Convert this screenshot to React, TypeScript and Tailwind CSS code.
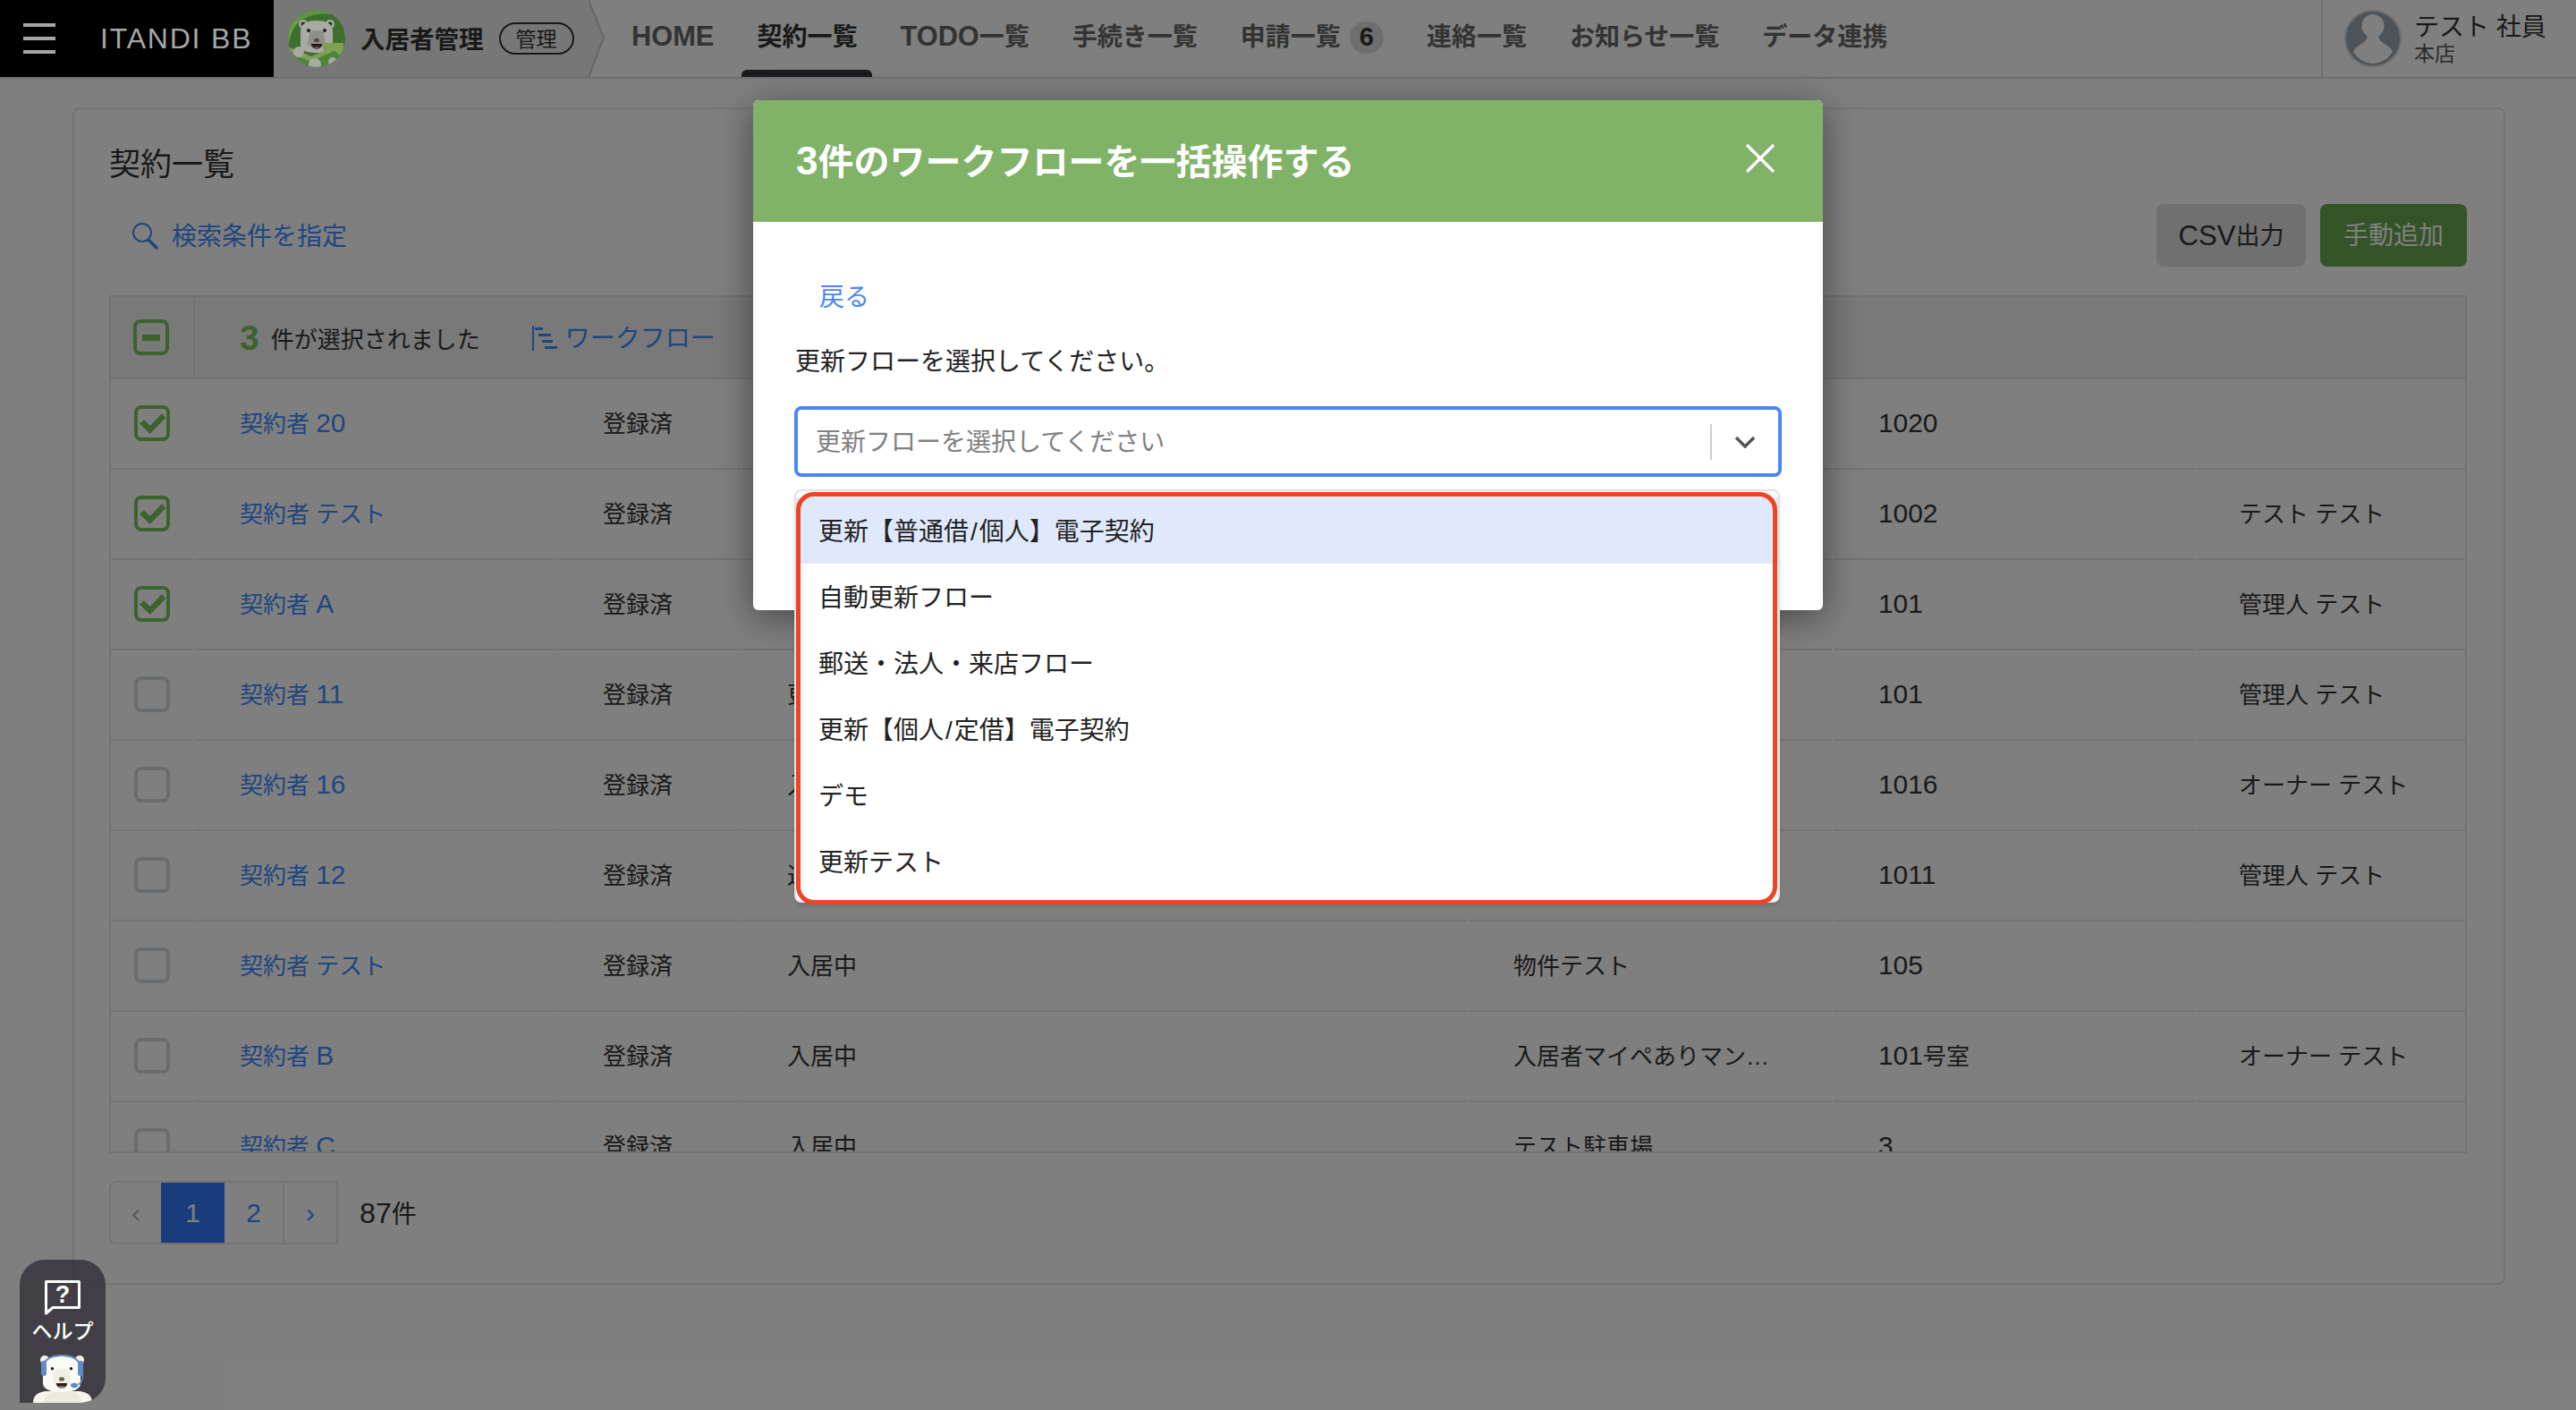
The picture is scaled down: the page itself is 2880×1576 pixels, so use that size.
import { Fragment } from 'react';

const NAV = ['HOME', '契約一覧', 'TODO一覧', '手続き一覧', '申請一覧', '連絡一覧', 'お知らせ一覧', 'データ連携'];

const ROWS = [
  { name: '契約者 20', status: '', building: '', room: '1020', owner: '', checked: true },
  { name: '契約者 テスト', status: '', building: '', room: '1002', owner: 'テスト テスト', checked: true },
  { name: '契約者 A', status: '', building: '', room: '101', owner: '管理人 テスト', checked: true },
  { name: '契約者 11', status: '更新中', building: '', room: '101', owner: '管理人 テスト', checked: false },
  { name: '契約者 16', status: '入居中', building: '', room: '1016', owner: 'オーナー テスト', checked: false },
  { name: '契約者 12', status: '退去済', building: '', room: '1011', owner: '管理人 テスト', checked: false },
  { name: '契約者 テスト', status: '入居中', building: '物件テスト', room: '105', owner: '', checked: false },
  { name: '契約者 B', status: '入居中', building: '入居者マイペありマン…', room: '101号室', owner: 'オーナー テスト', checked: false },
  { name: '契約者 C', status: '入居中', building: 'テスト駐車場', room: '3', owner: '', checked: false },
];

const OPTIONS = ['更新【普通借/個人】電子契約', '自動更新フロー', '郵送・法人・来店フロー', '更新【個人/定借】電子契約', 'デモ', '更新テスト'];

// latin glyphs in the original font run larger than the kana next to them
function Mixed({ text, tight }: { text: string; tight?: boolean }) {
  return (
    <>
      {text.split(/([A-Za-z0-9]+)/).map((part, i) =>
        /^[A-Za-z0-9]+$/.test(part) ? (
          <span key={i} className={`${tight ? 'text-[1.1em]' : 'text-[1.15em]'} leading-none`}>{part}</span>
        ) : (
          <Fragment key={i}>{part}</Fragment>
        )
      )}
    </>
  );
}

function Option({ text }: { text: string }) {
  const parts = text.split('/');
  return (
    <>
      {parts.map((part, i) => (
        <Fragment key={i}>
          {i > 0 && <span className="mx-[2px]">/</span>}
          {part}
        </Fragment>
      ))}
    </>
  );
}

function Checkbox({ state }: { state: 'on' | 'off' | 'some' }) {
  if (state === 'off') {
    return <div className="h-10 w-10 rounded-lg border-4 border-[#d3d8dc]" />;
  }
  return (
    <div className="flex h-10 w-10 items-center justify-center rounded-lg border-4 border-[#78c45c]">
      {state === 'some' ? (
        <div className="h-[7px] w-5 bg-[#78c45c]" />
      ) : (
        <svg width="32" height="32" viewBox="4 4 32 32" className="shrink-0">
          <polygon points="6,20.6 11,16.3 17.7,23 31,9 35.3,14 17.7,32" fill="#78c45c" />
        </svg>
      )}
    </div>
  );
}

function ManagerBear() {
  return (
    <svg width="64" height="64" viewBox="0 0 64 64" className="relative z-20 shrink-0">
      <defs>
        <clipPath id="bear-clip">
          <circle cx="32" cy="32" r="32" />
        </clipPath>
      </defs>
      <g clipPath="url(#bear-clip)">
        <rect width="64" height="64" fill="#3f6f2e" />
        <path d="M0 26 C14 6 36 0 60 8 L44 -4 L0 0 Z" fill="#5f9440" />
        <path d="M0 44 C2 28 6 18 14 12 L0 12 Z" fill="#6a9c46" />
        <circle cx="17" cy="16" r="5" fill="#a8a9a2" />
        <circle cx="47" cy="16" r="5" fill="#a8a9a2" />
        <circle cx="17" cy="16" r="2.4" fill="#2c2c2c" />
        <circle cx="47" cy="16" r="2.4" fill="#2c2c2c" />
        <path d="M14 24 C14 15 22 12 32 12 C42 12 50 15 50 24 L50 40 C50 46 42 48 32 48 C22 48 14 46 14 40 Z" fill="#a9aaa2" />
        <path d="M24 26 C24 22 40 22 40 26 L42 38 C42 43 22 43 22 38 Z" fill="#8f908a" />
        <circle cx="23" cy="23" r="2" fill="#1e1e1e" />
        <circle cx="41" cy="23" r="2" fill="#1e1e1e" />
        <ellipse cx="32" cy="34" rx="3" ry="2.2" fill="#544a42" />
        <path d="M26 38 L38 38 C38 42 35 43.5 32 43.5 C29 43.5 26 42 26 38 Z" fill="#1e1e1e" />
        <path d="M28 41.5 L36 41.5 C35 43 29 43 28 41.5 Z" fill="#b56d5a" />
        <path d="M2 42 L26 52 L40 46 L38 37 L62 37 L66 70 L0 70 Z" fill="#7da154" />
        <path d="M6 50 L26 58 L42 50 L52 46 L60 52 L56 70 L6 70 Z" fill="#4f8438" />
        <circle cx="12" cy="47" r="6" fill="#a9aaa2" />
        <circle cx="30" cy="61" r="7" fill="#a9aaa2" />
        <circle cx="50" cy="58" r="5" fill="#a9aaa2" />
      </g>
    </svg>
  );
}

function HelpBear() {
  return (
    <svg width="66" height="54" viewBox="0 0 66 54" className="mt-auto shrink-0">
      <path d="M0 54 C0 45 6 42 14 41 L52 41 C60 42 66 45 66 54 Z" fill="#f6f6ef" />
      <path d="M12 54 C12 44 20 40 33 40 C46 40 54 44 54 54 Z" fill="#ece9dd" />
      <circle cx="13" cy="6" r="5" fill="#f3efe2" />
      <circle cx="52" cy="6" r="5" fill="#f3efe2" />
      <path d="M11 14 C11 5 20 2 32 2 C44 2 53 5 53 14 L53 32 C53 39 44 42 32 42 C20 42 11 39 11 32 Z" fill="#fbfbf6" />
      <path d="M24 20 C24 15 40 15 40 20 L42 30 C42 39 22 39 22 30 Z" fill="#f0eee4" />
      <path d="M11 14 C13 4 22 1 32 1 C42 1 51 4 53 14" fill="none" stroke="#5f8cc4" strokeWidth="2" />
      <rect x="9" y="7" width="6" height="17" rx="3" fill="#5f8cc4" />
      <rect x="50" y="7" width="6" height="17" rx="3" fill="#5f8cc4" />
      <path d="M55 20 C57 27 54 33 47 34.5" fill="none" stroke="#5f8cc4" strokeWidth="1.4" />
      <ellipse cx="46" cy="34.5" rx="4" ry="2.8" fill="#5f8cc4" />
      <circle cx="21.5" cy="15.7" r="1.7" fill="#1e1e1e" />
      <circle cx="42.5" cy="15.7" r="1.7" fill="#1e1e1e" />
      <ellipse cx="32" cy="27.5" rx="3" ry="2.2" fill="#6b5d50" />
      <path d="M26 32 L38 32 C38 36 35 37.5 32 37.5 C29 37.5 26 36 26 32 Z" fill="#2a2020" />
      <path d="M28 35.4 L36 35.4 C35 37.2 29 37.2 28 35.4 Z" fill="#e3a08e" />
    </svg>
  );
}

export default function App() {
  return (
    <div className="relative h-[1576px] w-[2880px] overflow-hidden bg-white font-['Liberation_Sans','Noto_Sans_CJK_JP',sans-serif] text-[26px] text-[#333]">
      {/* header */}
      <header className="flex h-[88px] border-b-2 border-[#dcdcdc]">
        <div className="relative z-20 flex w-[306px] shrink-0 items-center bg-black pl-[26px]">
          <div className="flex w-9 flex-col gap-[11px]">
            <div className="h-1 bg-[#a6a6a6]" />
            <div className="h-1 bg-[#a6a6a6]" />
            <div className="h-1 bg-[#a6a6a6]" />
          </div>
          <span className="ml-[50px] text-[32px] tracking-[1.8px] text-[#a6a6a6]">ITANDI BB</span>
        </div>
        <div className="flex w-[352px] shrink-0 items-center bg-[#eeeeee] pl-4">
          <ManagerBear />
          <span className="ml-[17px] pt-[3px] text-[27.5px] font-bold text-[#333]">入居者管理</span>
          <span className="ml-[17px] flex h-9 w-[84px] items-center justify-center rounded-full border-2 border-[#333] pt-[2px] text-[23px] text-[#333]">管理</span>
        </div>
        <svg width="18" height="86" viewBox="0 0 18 86" className="shrink-0">
          <polygon points="0,0 17,42 0,86" fill="#eeeeee" />
          <polyline points="0,0 17,42 0,86" fill="none" stroke="#cccccc" strokeWidth="2" />
        </svg>
        <nav className="ml-[13px] flex gap-[14px]">
          {NAV.map(item => {
            const active = item === '契約一覧';
            return (
              <div key={item} className="flex flex-col px-[17px]">
                <div className={`flex flex-1 items-center pt-[5px] text-[28px] font-bold ${active ? 'text-[#333]' : 'text-[#666]'}`}>
                  <Mixed text={item} tight />
                  {item === '申請一覧' && (
                    <span className="ml-[10px] flex h-9 w-[38px] items-center justify-center rounded-full bg-[#dddddd] text-[29px] font-bold text-[#333]">6</span>
                  )}
                </div>
                <div className={`-mx-[17px] h-2 rounded-t-md ${active ? 'bg-[#35353f]' : ''}`} />
              </div>
            );
          })}
        </nav>
        <div className="ml-auto flex w-[285px] shrink-0 items-center border-l-2 border-[#dcdcdc] pl-[24px]">
          <svg width="64" height="64" viewBox="0 0 64 64" className="shrink-0">
            <circle cx="32" cy="32" r="31" fill="#98a8b4" stroke="#d8d8d8" strokeWidth="2" />
            <ellipse cx="32" cy="18" rx="12.5" ry="13" fill="#ffffff" />
            <path d="M26 26 C26 33 24 35 19 38 C14 41 11 44 10 47 C14 54 23 60 32 60 C41 60 50 54 54 47 C53 44 50 41 45 38 C40 35 38 33 38 26 Z" fill="#ffffff" />
          </svg>
          <div className="ml-[14px] flex flex-col">
            <span className="text-[28px] leading-[33px] text-[#333]">テスト 社員</span>
            <span className="text-[23px] leading-[26px] text-[#555]">本店</span>
          </div>
        </div>
      </header>

      {/* card */}
      <main className="pl-[81px] pr-[79px] pt-8">
        <section className="rounded-lg border-2 border-[#e6e6e6] pb-[43px] pl-[39px] pr-[41px] pt-[39px]">
          <h1 className="h-10 text-[35px] font-normal leading-[46px] text-[#333]">契約一覧</h1>
          <div className="mt-[27px] flex h-[70px] items-center">
            <svg width="32" height="34" viewBox="0 0 32 34" className="ml-[25px] shrink-0" fill="none" stroke="#3c8cff">
              <circle cx="12" cy="14" r="10" strokeWidth="2" />
              <path d="M19 22 L28 31" strokeWidth="3.5" strokeLinecap="round" />
            </svg>
            <span className="ml-[13px] pt-[3px] text-[28px] text-[#3c8cff]">検索条件を指定</span>
            <div className="ml-auto flex gap-4">
              <button className="flex h-[70px] w-[167px] items-center justify-center rounded-lg bg-[#e0e0e0] pt-[2px] text-[27px] text-[#333]">
                <Mixed text="CSV出力" />
              </button>
              <button className="flex h-[70px] w-[164px] items-center justify-center rounded-lg bg-[#68a84e] pt-[2px] text-[28px] text-white">手動追加</button>
            </div>
          </div>

          {/* table */}
          <div className="mt-8 h-[959px] overflow-hidden border-2 border-[#e6e6e6]">
            <div className="flex h-[92px] border-b-2 border-[#e6e6e6] bg-[#f2f2f2]">
              <div className="flex w-[94px] items-center justify-center border-r-2 border-[#e6e6e6] pr-[2px]">
                <Checkbox state="some" />
              </div>
              <div className="flex items-center pl-[50px]">
                <span className="text-[39px] font-bold leading-none text-[#78c45c]">3</span>
                <span className="ml-[13px] mt-[6px] text-[26px] text-[#333]">件が選択されました</span>
                <svg width="30" height="30" viewBox="0 0 30 30" className="ml-[57px] shrink-0" fill="#3c8cff">
                  <rect x="1" y="2" width="2" height="28" />
                  <rect x="4" y="4" width="9" height="3" />
                  <rect x="8" y="11" width="14" height="3" />
                  <rect x="12" y="18" width="12" height="3" />
                  <rect x="15" y="25" width="14" height="3" />
                </svg>
                <span className="ml-2 pt-[3px] text-[28px] text-[#3c8cff]">ワークフロー</span>
              </div>
            </div>
            {ROWS.map((row, i) => (
              <div key={i} className="grid h-[101px] grid-cols-[92px_404px_204px_810px_406px_403px_1fr] gap-x-[2px]">
                <div className="flex items-center justify-center border-b-2 border-[#e6e6e6] pb-[2px]">
                  <Checkbox state={row.checked ? 'on' : 'off'} />
                </div>
                <div className="flex items-center border-b-2 border-[#e6e6e6] pl-[50px] pt-[2px] text-[#3c8cff]">
                  <span><Mixed text={row.name} /></span>
                </div>
                <div className="flex items-center border-b-2 border-[#e6e6e6] pl-[50px] pt-[2px]">登録済</div>
                <div className="flex items-center border-b-2 border-[#e6e6e6] pl-[50px] pt-[2px]">{row.status}</div>
                <div className="flex items-center border-b-2 border-[#e6e6e6] pl-[50px] pt-[2px]">{row.building}</div>
                <div className="flex items-center border-b-2 border-[#e6e6e6] pl-[50px] pt-[2px]">
                  <span><Mixed text={row.room} /></span>
                </div>
                <div className="flex items-center border-b-2 border-[#e6e6e6] pl-[48px] pt-[2px]">{row.owner}</div>
              </div>
            ))}
          </div>

          {/* pagination */}
          <div className="mt-[31px] flex items-center">
            <div className="flex h-[71px] items-stretch overflow-hidden rounded-l-lg border-2 border-[#e6e6e6] text-[30px]">
              <div className="flex w-[56px] items-center justify-center text-[#a8b0b8]">‹</div>
              <div className="-my-[2px] flex w-[71px] items-center justify-center bg-[#3478f8] text-white">1</div>
              <div className="flex w-[67px] items-center justify-center border-r-2 border-[#e6e6e6] text-[#3c8cff]">2</div>
              <div className="flex w-[58px] items-center justify-center text-[#3c8cff]">›</div>
            </div>
            <span className="ml-6 pt-1 text-[28px] text-[#333]"><Mixed text="87件" /></span>
          </div>
        </section>
      </main>

      {/* backdrop */}
      <div className="absolute inset-0 z-10 bg-black/50" />

      {/* help button */}
      <div className="absolute bottom-2 left-[22px] z-20 flex h-[160px] w-[96px] flex-col items-center overflow-hidden rounded-[28px] rounded-bl-none bg-[#36343b]/85 pt-[22px]">
        <svg width="42" height="42" viewBox="0 0 42 42" className="shrink-0">
          <path d="M2.5 2.5 H39.5 V31.5 H10 L2.5 38 Z" fill="none" stroke="#ffffff" strokeWidth="3" strokeLinejoin="round" />
          <text x="21" y="26" textAnchor="middle" fontSize="27" fontWeight="700" fill="#ffffff">?</text>
        </svg>
        <span className="text-[23px] font-medium leading-8 text-white">ヘルプ</span>
        <HelpBear />
      </div>

      {/* modal */}
      <div className="absolute left-[842px] top-[112px] z-30 h-[570px] w-[1196px] rounded-md bg-white shadow-[0_8px_40px_rgba(0,0,0,0.45)]">
        <div className="flex h-[136px] items-center justify-between rounded-t-md bg-[#80b268] pl-[48px] pr-[54px]">
          <h2 className="pt-[2px] text-[40px] font-bold text-white"><Mixed text="3件のワークフローを一括操作する" tight /></h2>
          <svg width="32" height="32" viewBox="0 0 32 32" className="mb-[7px] shrink-0" stroke="#ffffff" strokeWidth="3.5">
            <path d="M1 1 L31 31 M31 1 L1 31" />
          </svg>
        </div>
        <div className="px-[46px] pt-[68px]">
          <a className="ml-[28px] block text-[28px] leading-[34px] text-[#4a86f7]">戻る</a>
          <p className="ml-[1px] mt-[38px] text-[28px] leading-[34px] text-[#222]">更新フローを選択してください。</p>
          <div className="relative mt-[32px]">
            <div className="flex h-[79px] items-center rounded-lg border-4 border-[#4a86f7] pl-5">
              <span className="pt-[3px] text-[28px] text-[#808080]">更新フローを選択してください</span>
              <div className="ml-auto h-10 w-[2px] bg-[#cccccc]" />
              <svg width="24" height="14" viewBox="0 0 24 14" className="mx-[25px] shrink-0" fill="none" stroke="#555555" strokeWidth="3.5">
                <path d="M2 2 L12 12 L22 2" />
              </svg>
            </div>
            <div className="absolute left-0 top-[93px] w-[1102px] rounded-lg border-2 border-[#e2e2e2] bg-white py-[7px] shadow-md">
              {OPTIONS.map((opt, i) => (
                <div key={opt} className={`flex h-[74px] items-center pl-[25px] pt-[3px] text-[28px] text-[#222] ${i === 0 ? 'bg-[#dfe9fb]' : ''}`}>
                  <span><Option text={opt} /></span>
                </div>
              ))}
              <div className="absolute left-0 top-[1px] h-[461px] w-[1097px] rounded-[20px] border-[5px] border-[#ee4423]" />
            </div>
          </div>
        </div>
      </div>
    </div>
  );
}
